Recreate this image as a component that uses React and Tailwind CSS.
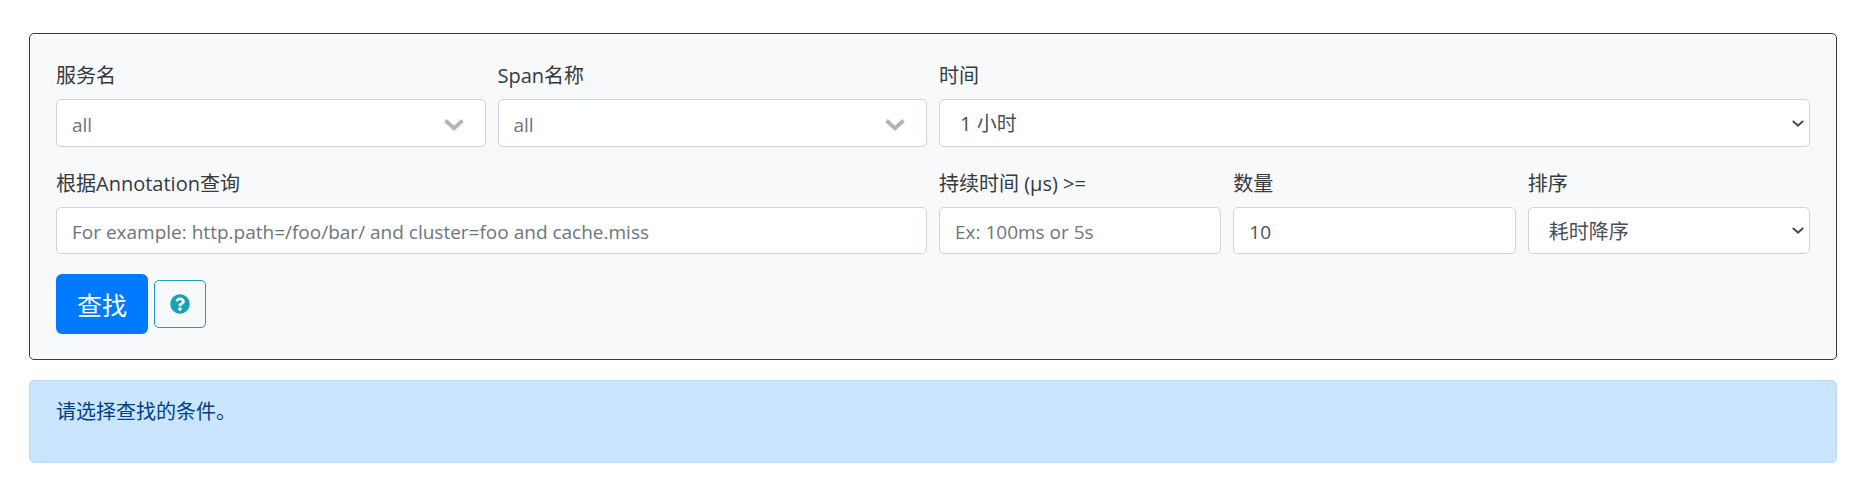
import { FaQuestionCircle } from 'react-icons/fa';

const services = ['all'];
const spans = ['all'];
const lookbacks = ['1 小时', '2 小时', '6 小时', '12 小时', '1 天'];
const sortOrders = ['耗时降序', '耗时升序', '时间降序', '时间升序'];

const control = 'block w-full rounded-[5px] border border-[#ced4da] bg-white outline-none focus:border-[#80bdff]';
const textInput = `${control} h-[47px] px-[15px] pt-[2px] text-[19px] text-[#495057] placeholder:text-[#6c757d] placeholder:opacity-100`;

function Field({ id, label, className, children }) {
    return (
        <div className={className}>
            <label htmlFor={id} className="mb-2 block leading-[30px]">{label}</label>
            {children}
        </div>
    );
}

// Searchable-looking drop-down with the wide grey chevron
function NameSelect({ id, options }) {
    return (
        <div className="relative">
            <select id={id} className={`${control} h-12 appearance-none pt-1 pr-12 pl-[15px] text-[19px] text-[#6c757d]`}>
                {options.map((option) => <option key={option}>{option}</option>)}
            </select>
            <svg className="pointer-events-none absolute top-5 right-[22px] h-3 w-5" viewBox="0 0 20 12" fill="none" stroke="#adb5bd" strokeWidth="3.8" aria-hidden="true">
                <path d="M1.5 1.5 L10 9.4 L18.5 1.5" />
            </svg>
        </div>
    );
}

function PlainSelect({ id, options, className }) {
    return (
        <div className="relative">
            <select id={id} className={`${control} appearance-none pt-[2px] pr-8 pl-5 text-[#495057] ${className}`}>
                {options.map((option) => <option key={option}>{option}</option>)}
            </select>
            <div className="pointer-events-none absolute inset-y-0 right-[6px] flex items-center">
                <svg className="h-[7px] w-3" viewBox="0 0 12 7" fill="none" stroke="#495057" strokeWidth="2" aria-hidden="true">
                    <path d="M0.8 0.9 L6 5.6 L11.2 0.9" />
                </svg>
            </div>
        </div>
    );
}

export default function App() {
    return (
        <main className="pt-[33px] pr-[26px] pl-[29px] font-['Open_Sans','Noto_Sans_CJK_SC',sans-serif] text-[20px] text-[#343a40]">
            <form
                className="rounded-[5px] border border-[#343a40] bg-[#f8f9fa] px-[26px] pt-[27px] pb-[25px]"
                onSubmit={(e) => e.preventDefault()}
            >
                <div className="grid grid-cols-12 gap-x-3 gap-y-[22px]">
                    <Field id="serviceName" label="服务名" className="col-span-3">
                        <NameSelect id="serviceName" options={services} />
                    </Field>
                    <Field id="spanName" label="Span名称" className="col-span-3">
                        <NameSelect id="spanName" options={spans} />
                    </Field>
                    <Field id="lookback" label="时间" className="col-span-6">
                        <PlainSelect id="lookback" options={lookbacks} className="h-12" />
                    </Field>
                    <Field id="annotationQuery" label="根据Annotation查询" className="col-span-6">
                        <input
                            id="annotationQuery"
                            type="text"
                            placeholder="For example: http.path=/foo/bar/ and cluster=foo and cache.miss"
                            className={textInput}
                        />
                    </Field>
                    <Field id="minDuration" label="持续时间 (μs) >=" className="col-span-2">
                        <input id="minDuration" type="text" placeholder="Ex: 100ms or 5s" className={textInput} />
                    </Field>
                    <Field id="limit" label="数量" className="col-span-2">
                        <input id="limit" type="text" inputMode="numeric" defaultValue="10" className={textInput} />
                    </Field>
                    <Field id="sortOrder" label="排序" className="col-span-2">
                        <PlainSelect id="sortOrder" options={sortOrders} className="h-[47px]" />
                    </Field>
                </div>

                <div className="mt-5 flex items-center gap-[6px]">
                    <button type="submit" className="h-[60px] rounded-md bg-[#007bff] px-[21px] pt-1 text-[25px] text-white hover:bg-[#0069d9]">
                        查找
                    </button>
                    <button
                        type="button"
                        aria-label="帮助"
                        className="flex h-12 w-[52px] items-center justify-center rounded-[5px] border border-[#17a2b8] text-[#17a2b8]"
                    >
                        <FaQuestionCircle className="size-5" />
                    </button>
                </div>
            </form>

            <div role="alert" className="mt-5 rounded-[5px] border border-[#b8daff] bg-[#cce5ff] px-[26px] pt-4 pb-[35px] leading-[30px] text-[#004085]">
                请选择查找的条件。
            </div>
        </main>
    );
}
